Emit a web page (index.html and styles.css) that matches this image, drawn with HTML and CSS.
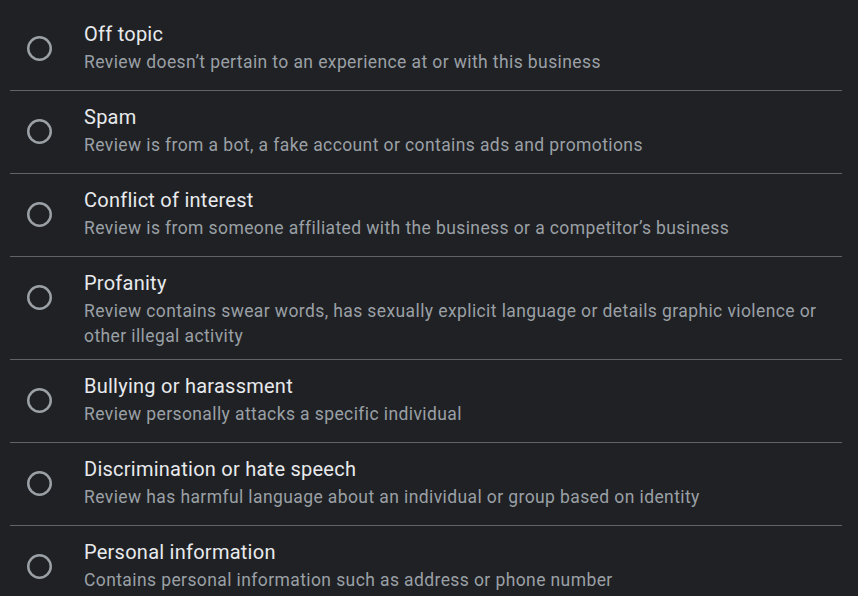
FILE: index.html
```html
<!DOCTYPE html>
<html lang="en">
<head>
<meta charset="utf-8">
<title>Report review</title>
<link rel="stylesheet" href="styles.css">
</head>
<body>
<ul class="options">
  <li class="option">
    <span class="radio"><svg viewBox="0 0 25 25" width="25" height="25"><circle cx="12.5" cy="12.5" r="11.25"/></svg></span>
    <div class="text">
      <div class="title">Off topic</div>
      <div class="desc">Review doesn’t pertain to an experience at or with this business</div>
    </div>
  </li>
  <li class="option">
    <span class="radio"><svg viewBox="0 0 25 25" width="25" height="25"><circle cx="12.5" cy="12.5" r="11.25"/></svg></span>
    <div class="text">
      <div class="title">Spam</div>
      <div class="desc">Review is from a bot, a fake account or contains ads and promotions</div>
    </div>
  </li>
  <li class="option">
    <span class="radio"><svg viewBox="0 0 25 25" width="25" height="25"><circle cx="12.5" cy="12.5" r="11.25"/></svg></span>
    <div class="text">
      <div class="title">Conflict of interest</div>
      <div class="desc">Review is from someone affiliated with the business or a competitor’s business</div>
    </div>
  </li>
  <li class="option">
    <span class="radio"><svg viewBox="0 0 25 25" width="25" height="25"><circle cx="12.5" cy="12.5" r="11.25"/></svg></span>
    <div class="text">
      <div class="title">Profanity</div>
      <div class="desc">Review contains swear words, has sexually explicit language or details graphic violence or other illegal activity</div>
    </div>
  </li>
  <li class="option">
    <span class="radio"><svg viewBox="0 0 25 25" width="25" height="25"><circle cx="12.5" cy="12.5" r="11.25"/></svg></span>
    <div class="text">
      <div class="title">Bullying or harassment</div>
      <div class="desc">Review personally attacks a specific individual</div>
    </div>
  </li>
  <li class="option">
    <span class="radio"><svg viewBox="0 0 25 25" width="25" height="25"><circle cx="12.5" cy="12.5" r="11.25"/></svg></span>
    <div class="text">
      <div class="title">Discrimination or hate speech</div>
      <div class="desc">Review has harmful language about an individual or group based on identity</div>
    </div>
  </li>
  <li class="option">
    <span class="radio"><svg viewBox="0 0 25 25" width="25" height="25"><circle cx="12.5" cy="12.5" r="11.25"/></svg></span>
    <div class="text">
      <div class="title">Personal information</div>
      <div class="desc">Contains personal information such as address or phone number</div>
    </div>
  </li>
</ul>
</body>
</html>
```
FILE: styles.css
```css
html, body {
  margin: 0;
  background: #202124;
  font-family: Roboto, "Liberation Sans", sans-serif;
}
.options {
  list-style: none;
  margin: 0;
  padding: 8px 16px 0 10px;
}
.option {
  display: flex;
  align-items: flex-start;
  min-height: 82px;
  border-bottom: 1px solid #5f6368;
}
.radio {
  flex: none;
  width: 25px;
  height: 25px;
  margin: 28px 32px 0 17px;
  display: block;
}
.radio svg {
  display: block;
  fill: none;
  stroke: #9aa0a6;
  stroke-width: 2.5;
}
.text {
  padding: 11px 0 10px;
  flex: 1;
}
.title {
  font-size: 20px;
  line-height: 30px;
  letter-spacing: 0.25px;
  color: #e8eaed;
}
.desc {
  margin-top: 1px;
  font-size: 17.5px;
  line-height: 25px;
  letter-spacing: 0.4px;
  color: #9aa0a6;
}
```
